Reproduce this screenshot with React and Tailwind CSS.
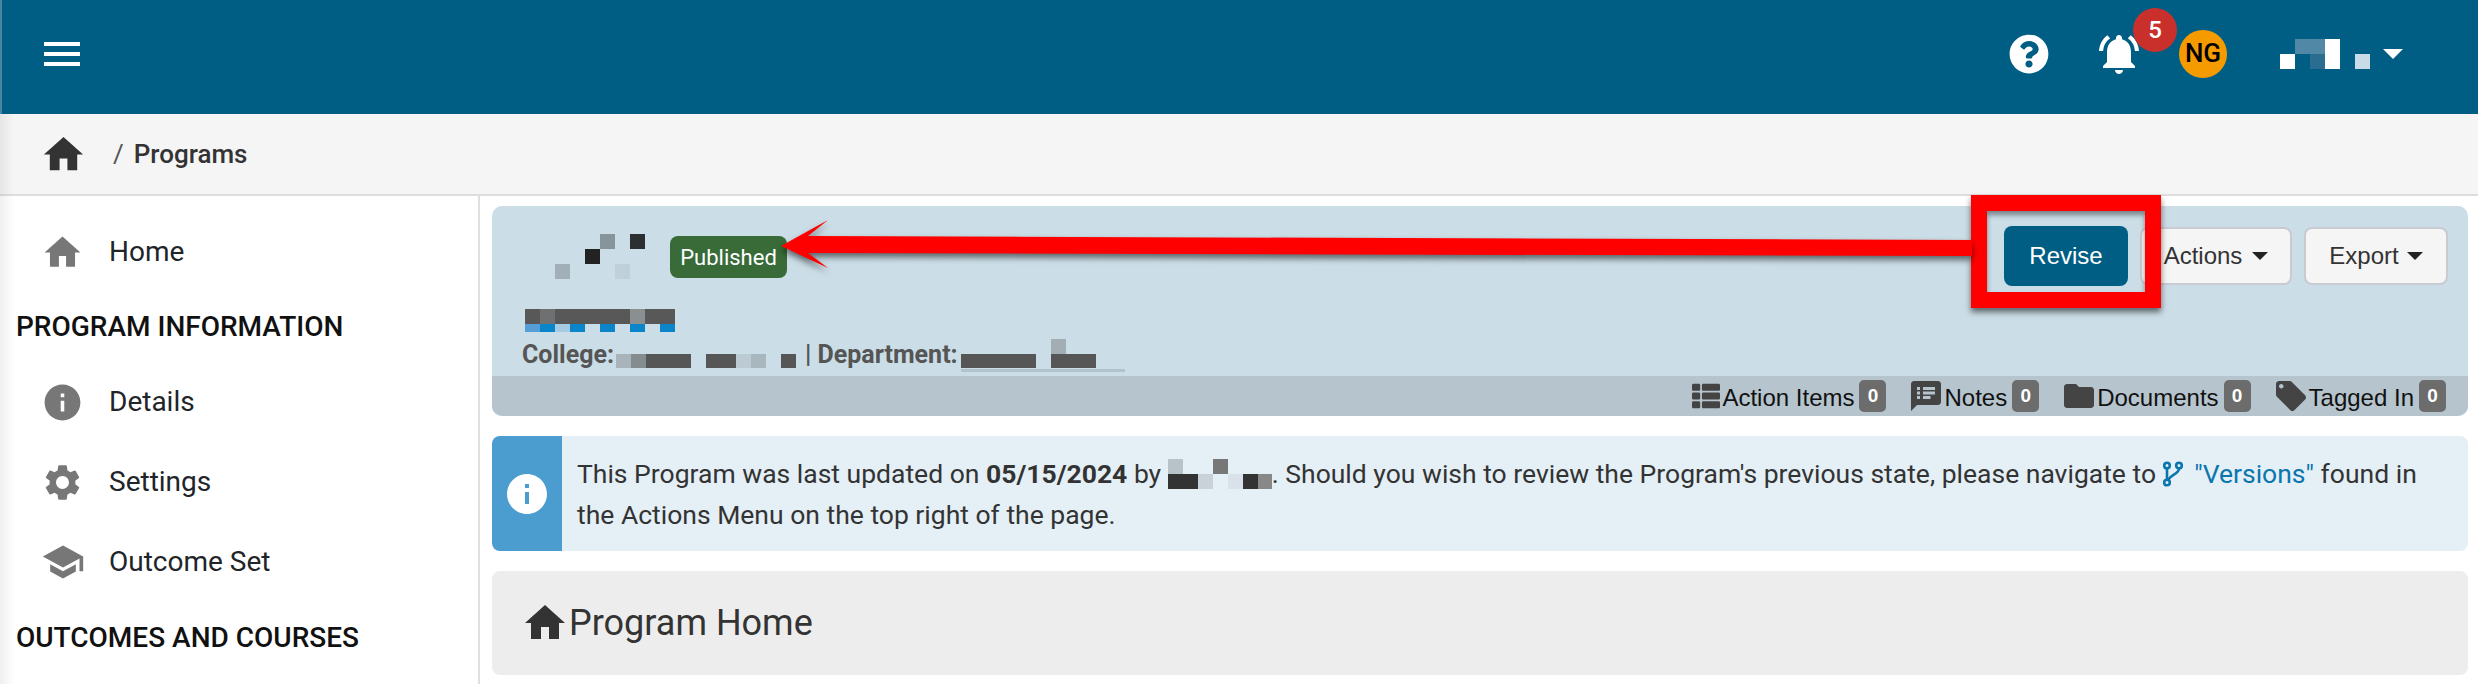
import { FaQuestionCircle, FaThList } from "react-icons/fa";
import { MdFolder, MdHome, MdInfo, MdLocalOffer, MdNotificationsActive, MdSchool, MdSettings, MdSpeakerNotes } from "react-icons/md";

const helvetica = "font-['Liberation_Sans',Arial,sans-serif]";

function Mosaic({ w, h, cells, className = "" }) {
  return (
    <svg width={w} height={h} viewBox={`0 0 ${w} ${h}`} className={className} shapeRendering="crispEdges">
      {cells.map(([x, y, cw, ch, fill], i) => (
        <rect key={i} x={x} y={y} width={cw} height={ch} fill={fill} />
      ))}
    </svg>
  );
}

function Count({ n }) {
  return (
    <span className="ml-[5px] flex h-[32px] w-[27px] items-center justify-center rounded-[5px] bg-[#6c6c6c] text-[19px] font-bold text-white">
      {n}
    </span>
  );
}

function SideItem({ icon, label }) {
  return (
    <div className="flex h-[80px] items-center pl-[41px] text-[28px] text-[#212529]">
      <span className="flex w-[68px] text-[#777]">{icon}</span>
      {label}
    </div>
  );
}

function Caret({ className = "border-t-[#222]" }) {
  return <span className={`h-0 w-0 border-x-[8px] border-t-[8px] border-x-transparent ${className}`} />;
}

export default function App() {
  return (
    <div className="relative h-[684px] overflow-hidden bg-white font-['Roboto',sans-serif] text-[#333]">
      {/* top bar */}
      <header className="flex h-[114px] items-center border-l-2 border-[#4a84a3] bg-[#005e85] pb-[7px] pl-[42px] pr-[75px]">
        <div className="flex w-[36px] flex-col gap-[6px]">
          <span className="h-[4px] bg-white" />
          <span className="h-[4px] bg-white" />
          <span className="h-[4px] bg-white" />
        </div>
        <div className="ml-auto flex items-center text-white">
          <FaQuestionCircle size={40} />
          <div className="relative ml-[46px]">
            <MdNotificationsActive size={48} className="text-white" />
            <span className="absolute -top-[22px] left-[38px] flex h-[44px] w-[44px] items-center justify-center rounded-full bg-[#c9302c] text-[24px] font-medium">
              5
            </span>
          </div>
          <span className="ml-[36px] flex h-[48px] w-[48px] items-center justify-center rounded-full bg-[#f59b00] text-[26px] font-medium text-black">
            NG
          </span>
          <Mosaic
            className="ml-[53px]"
            w={90}
            h={30}
            cells={[
              [0, 15, 15, 15, "#fff"],
              [15, 0, 30, 15, "#5188a6"],
              [30, 15, 15, 15, "#2a6d90"],
              [45, 0, 15, 30, "#fff"],
              [75, 15, 15, 15, "#c8dbe6"],
            ]}
          />
          <span className="ml-[13px] h-0 w-0 border-x-[10px] border-t-[10px] border-x-transparent border-t-white" />
        </div>
      </header>

      {/* breadcrumb */}
      <div className="flex h-[82px] items-center border-b-2 border-[#dedede] bg-[#f5f5f5] pl-[40px] text-[26px]">
        <MdHome size={47} className="text-[#333]" />
        <span className="ml-[26px] text-[#555]">/</span>
        <span className="ml-[10px] font-medium text-[#333]">Programs</span>
      </div>

      <div className="flex">
        {/* sidebar */}
        <aside className="h-[488px] w-[480px] shrink-0 border-r-2 border-[#e0e0e0] pt-[16px]">
          <SideItem icon={<MdHome size={43} />} label="Home" />
          <h3 className="mt-[15px] pl-[16px] text-[28px] font-medium leading-[40px] text-[#111]">PROGRAM INFORMATION</h3>
          <div className="mt-[15px]">
            <SideItem icon={<MdInfo size={43} />} label="Details" />
            <SideItem icon={<MdSettings size={43} />} label="Settings" />
            <SideItem icon={<MdSchool size={44} />} label="Outcome Set" />
          </div>
          <h3 className="mt-[16px] pl-[16px] text-[28px] font-medium leading-[40px] text-[#111]">OUTCOMES AND COURSES</h3>
        </aside>

        {/* main */}
        <main className="min-w-0 flex-1 pl-[12px] pr-[10px] pt-[10px]">
          <section className="overflow-hidden rounded-[10px] bg-[#cbdde6]">
            <div className="flex h-[170px]">
              <div className="pl-[30px] pt-[28px]">
                <div className="flex items-start">
                  <Mosaic
                    className="ml-[33px]"
                    w={90}
                    h={45}
                    cells={[
                      [45, 0, 15, 15, "#87949b"],
                      [75, 0, 15, 15, "#2c2f31"],
                      [30, 15, 15, 15, "#222"],
                      [0, 30, 15, 15, "#a0afb8"],
                      [60, 30, 15, 15, "#c0d0d8"],
                    ]}
                  />
                  <span className="ml-[25px] mt-[2px] flex h-[42px] w-[117px] items-center justify-center rounded-[8px] bg-[#386b38] text-[22px] text-white">
                    Published
                  </span>
                </div>
                <Mosaic
                  className="ml-[3px] mt-[30px]"
                  w={150}
                  h={23}
                  cells={[
                    [0, 0, 150, 15, "#585858"],
                    [15, 0, 15, 15, "#6e7072"],
                    [105, 0, 15, 15, "#8a8f92"],
                    [0, 15, 15, 8, "#54a0d6"],
                    [15, 15, 15, 8, "#0a85c9"],
                    [30, 15, 15, 8, "#a5cbe2"],
                    [45, 15, 15, 8, "#0a85c9"],
                    [75, 15, 15, 8, "#0a85c9"],
                    [105, 15, 15, 8, "#0a85c9"],
                    [135, 15, 15, 8, "#0a85c9"],
                  ]}
                />
                <div className="mt-[7px] flex items-end text-[25px] font-bold leading-[28px] text-[#555]">
                  <span className="mb-[3px]">College:</span>
                  <Mosaic
                    className="mb-[4px] ml-[2px]"
                    w={180}
                    h={14}
                    cells={[
                      [0, 0, 15, 14, "#a9b4ba"],
                      [15, 0, 15, 14, "#858c90"],
                      [30, 0, 45, 14, "#565656"],
                      [90, 0, 30, 14, "#565656"],
                      [120, 0, 15, 14, "#bccbd3"],
                      [135, 0, 15, 14, "#a8b7be"],
                      [165, 0, 15, 14, "#565656"],
                    ]}
                  />
                  <span className="mb-[3px] ml-[9px]">| Department:</span>
                  <Mosaic
                    className="ml-[3px]"
                    w={164}
                    h={33}
                    cells={[
                      [0, 30, 164, 3, "#b3c3cc"],
                      [0, 15, 75, 14, "#565656"],
                      [90, 0, 15, 15, "#a2adb4"],
                      [90, 15, 45, 14, "#565656"],
                    ]}
                  />
                </div>
              </div>
              <div className={`${helvetica} ml-auto flex items-start pr-[20px] pt-[20px] text-[24px]`}>
                <button className="flex h-[60px] w-[124px] items-center justify-center rounded-[8px] bg-[#005e85] text-white">
                  Revise
                </button>
                <button className="ml-[12px] mt-px flex h-[58px] w-[152px] items-center justify-center gap-[10px] rounded-[8px] border-2 border-[#c8ccd0] bg-[#f5f5f5] text-[#333]">
                  Actions
                  <Caret />
                </button>
                <button className="ml-[12px] mt-px flex h-[58px] w-[144px] items-center justify-center gap-[8px] rounded-[8px] border-2 border-[#c8ccd0] bg-[#f5f5f5] text-[#333]">
                  Export
                  <Caret />
                </button>
              </div>
            </div>
            <div className={`${helvetica} flex h-[40px] items-center justify-end bg-[#b6c4cd] pr-[22px] text-[24px] text-[#111]`}>
              <span className="flex items-center">
                <FaThList size={28} className="mr-[2px] text-[#444]" />
                <span className="pt-[3px]">Action Items</span>
                <Count n={0} />
              </span>
              <span className="ml-[22px] flex items-center">
                <MdSpeakerNotes size={36} className="text-[#444]" />
                <span className="pt-[3px]">Notes</span>
                <Count n={0} />
              </span>
              <span className="ml-[22px] flex items-center">
                <MdFolder size={36} className="text-[#444]" />
                <span className="pt-[3px]">Documents</span>
                <Count n={0} />
              </span>
              <span className="ml-[22px] flex items-center">
                <MdLocalOffer size={36} className="text-[#444]" />
                <span className="pt-[3px]">Tagged In</span>
                <Count n={0} />
              </span>
            </div>
          </section>

          <section className="mt-[20px] flex h-[115px] overflow-hidden rounded-[8px] bg-[#e4eff6]">
            <div className="flex w-[70px] shrink-0 items-center justify-center bg-[#4b9ccf]">
              <MdInfo size={48} className="text-white" />
            </div>
            <p className="pl-[15px] pr-[30px] pt-[17px] text-[26.5px] leading-[41px] text-[#333]">
              This Program was last updated on <b>05/15/2024</b> by{" "}
              <Mosaic
                className="inline-block align-[-6px]"
                w={104}
                h={30}
                cells={[
                  [0, 0, 15, 15, "#b8c2c9"],
                  [0, 15, 30, 15, "#333"],
                  [30, 15, 15, 15, "#c8d2d8"],
                  [45, 0, 15, 15, "#777"],
                  [60, 15, 15, 15, "#d8e2e8"],
                  [75, 15, 15, 15, "#333"],
                  [90, 15, 14, 15, "#888"],
                ]}
              />
              . Should you wish to review the Program's previous state, please navigate to{" "}
              <svg width="20" height="26" viewBox="0 0 20 26" fill="none" stroke="#0a76ad" strokeWidth="2.6" className="mr-[5px] inline-block align-[-4px]">
                <circle cx="4" cy="4.5" r="2.8" />
                <circle cx="16" cy="4.5" r="2.8" />
                <circle cx="4" cy="21.5" r="2.8" />
                <path d="M4 7.5V18.5M16 7.5C16 13 8 13.5 5 19" />
              </svg>{" "}
              <span className="text-[#0a76ad]">"Versions"</span> found in the Actions Menu on the top right of the page.
            </p>
          </section>

          <section className="mt-[20px] flex h-[104px] items-center rounded-[8px] bg-[#ededed] pl-[29px] text-[36px] text-[#333]">
            <MdHome size={48} className="text-[#333]" />
            Program Home
          </section>
        </main>
      </div>

      {/* soft edge down the left of the page */}
      <div className="absolute bottom-0 left-0 top-[114px] w-[14px] bg-linear-to-r from-[#00000010] to-transparent" />

      {/* red annotation box and arrow */}
      <div className="absolute left-[1971px] top-[195px] h-[113px] w-[190px] border-[16px] border-[#ff0000] shadow-[0_4px_6px_rgba(0,0,0,0.55),inset_0_4px_5px_rgba(0,0,0,0.4)]" />
      <svg className="absolute left-[775px] top-[215px] [filter:drop-shadow(0_4px_3px_rgba(0,0,0,0.55))]" width="1197" height="62" viewBox="0 0 1197 62">
        <path d="M6 31 L53 5 L33 21 L1197 25 L1197 41 L33 38 L53 53 Z" fill="#ff0000" />
      </svg>
    </div>
  );
}
